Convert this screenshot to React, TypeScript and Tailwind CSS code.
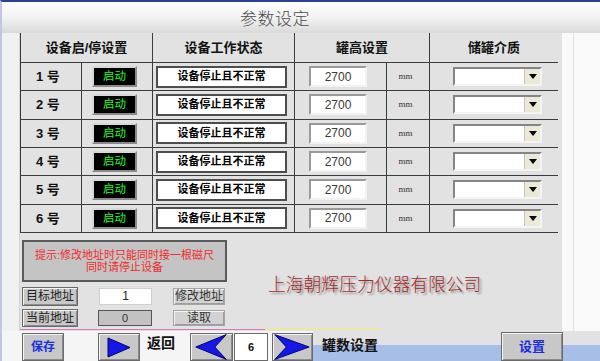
const rows = [1, 2, 3, 4, 5, 6]

const raised =
  'bg-[#c8c8c8] border border-[#6a6a6a] shadow-[inset_1px_1px_0_#f4f4f4,inset_-1px_-1px_0_#8c8c8c]'
const flatBtn =
  'bg-[#d2d2d2] border border-[#a4a4a4] shadow-[inset_1px_1px_0_#f4f4f4,inset_-1px_-1px_0_#9c9c9c]'

function DeviceRow({ n }: { n: number }) {
  return (
    <div className="flex h-[28.33px] border-b border-[#3c3c3c] items-center">
      <div className="w-[62px] h-full border-l border-r border-[#3c3c3c] flex items-center pl-[15px] text-[13px] font-bold text-[#111]">
        {n} 号
      </div>
      <div className="w-[71px] h-full border-r border-[#3c3c3c] flex items-center pl-[10px]">
        <div className="w-[45px] h-[21px] bg-black border-2 border-t-[#d8d8d8] border-l-[#d8d8d8] border-b-[#8a8a8a] border-r-[#8a8a8a] flex items-center justify-center text-[11.5px] text-[#1cff1c] leading-none">
          启动
        </div>
      </div>
      <div className="w-[142px] h-full border-r border-[#3c3c3c] flex items-center pl-[3px]">
        <div className="w-[131px] h-[22px] bg-white border-2 border-[#4e4e4e] flex items-center justify-center text-[11px] font-bold text-black leading-none">
          设备停止且不正常
        </div>
      </div>
      <div className="w-[92px] h-full border-r border-[#3c3c3c] flex items-center pl-[14px]">
        <div className="w-[58px] h-[21px] bg-white border-2 border-t-[#9a9a9a] border-l-[#9a9a9a] border-b-[#f2f2f2] border-r-[#f2f2f2] flex items-center justify-center text-[12px] text-[#3a3a3a] leading-none">
          2700
        </div>
      </div>
      <div className="w-[43px] h-full border-r border-[#3c3c3c] flex items-center justify-center pr-[5px] font-['Liberation_Serif',serif] text-[9px] text-[#333]">
        mm
      </div>
      <div className="w-[128px] h-full flex items-center pl-[23px]">
        <div className="w-[89px] h-[19px] bg-white border-2 border-t-[#858585] border-l-[#858585] border-b-[#f4f4f4] border-r-[#f4f4f4] flex justify-end">
          <div className="w-[16px] h-full bg-[#ece9d8] border-l border-[#c8c4b0] flex items-center justify-center">
            <svg width="8" height="5" viewBox="0 0 8 5">
              <polygon points="0,0 8,0 4,5" fill="#000" />
            </svg>
          </div>
        </div>
      </div>
    </div>
  )
}

export default function App() {
  return (
    <div className="w-[600px] h-[361px] overflow-hidden bg-white flex flex-col border-t-2 border-t-[#2e3f96] border-l-2 border-l-[#c2c4ea] font-['Liberation_Sans','Noto_Sans_CJK_SC',sans-serif]">
      {/* title */}
      <div className="h-[31px] shrink-0 bg-gradient-to-b from-[#fdfdfe] via-[#f2f2f2] to-[#dadada] flex items-center pl-[238px] pt-[4px]">
        <span className="text-[17px] text-[#4a4a4a] tracking-[0.5px] font-light">参数设定</span>
      </div>

      {/* body */}
      <div className="h-[298px] shrink-0 flex">
        <div className="w-[18px] bg-[#f1f1f1] border-r border-[#d4d4d4]" />
        <div className="w-[542px] bg-[#e2e2e2] flex flex-col">
          <div className="w-[538px]">
            <div className="flex h-[30px] border-b border-[#3c3c3c] text-[13px] font-bold text-[#111]">
              <div className="w-[133px] border-l border-r border-[#3c3c3c] flex items-center justify-center">设备启/停设置</div>
              <div className="w-[142px] border-r border-[#3c3c3c] flex items-center justify-center">设备工作状态</div>
              <div className="w-[135px] border-r border-[#3c3c3c] flex items-center justify-center">罐高设置</div>
              <div className="w-[128px] flex items-center justify-center">储罐介质</div>
            </div>
            {rows.map((n) => (
              <DeviceRow key={n} n={n} />
            ))}
          </div>

          <div className="flex-1 flex flex-col">
            <div className="flex flex-1">
              <div className="w-[248px] pl-[2px] pt-[7px] flex flex-col">
                <div className="w-[205px] h-[42px] bg-[#c4c4c4] border-2 border-[#5a5a5a] flex flex-col items-center justify-center text-[11px] leading-[12px] text-[#f22a2a]">
                  <span>提示:修改地址时只能同时接一根磁尺</span>
                  <span>同时请停止设备</span>
                </div>
                <div className="flex items-center mt-[5px] h-[19px]">
                  <div className={`w-[56px] h-[19px] ${raised} flex items-center justify-center text-[12px] text-[#222]`}>目标地址</div>
                  <div className="ml-[21px] w-[53px] h-[17px] bg-white border border-[#cfcfcf] flex items-center justify-center text-[12px] text-[#222]">1</div>
                  <div className={`ml-[21px] w-[52px] h-[17px] ${flatBtn} flex items-center justify-center text-[12px] text-[#333]`}>修改地址</div>
                </div>
                <div className="flex items-center mt-[3px] h-[18px]">
                  <div className={`w-[56px] h-[18px] ${raised} flex items-center justify-center text-[12px] text-[#222]`}>当前地址</div>
                  <div className="ml-[20px] w-[54px] h-[16px] bg-[#c2c2c2] border border-[#555] flex items-center justify-center text-[11px] text-[#333]">0</div>
                  <div className={`ml-[21px] w-[52px] h-[16px] ${flatBtn} flex items-center justify-center text-[12px] text-[#333]`}>读取</div>
                </div>
              </div>
              <div className="pt-[41px]">
                <span className="text-[17.8px] leading-[22px] text-[#a42a2a] font-light [text-shadow:2px_2px_2px_#8c8c8c]">
                  上海朝辉压力仪器有限公司
                </span>
              </div>
            </div>
            <div className="flex h-[1px] mb-[1px]">
              <div className="w-[245px] bg-[#d878c8]" />
              <div className="w-[115px] bg-[#f2ee70]" />
            </div>
          </div>
        </div>
        <div className="flex-1 bg-[#f9f9f9]">
          <div className="ml-[11px] h-full border-l border-[#e2e2e2]" />
        </div>
      </div>

      {/* bottom bar */}
      <div className="h-[30px] shrink-0 flex">
        <div className="w-[311px] bg-[#f5f5f5] flex items-start pt-[2px]">
          <div className={`ml-[20px] w-[42px] h-[28px] ${raised} flex items-center justify-center text-[12px] font-bold text-[#1a2ee0]`}>保存</div>
          <div className={`ml-[34px] w-[42px] h-[28px] ${raised} flex items-center justify-center`}>
            <svg width="24" height="21" viewBox="0 0 24 21">
              <polygon points="1,1 23,10.5 1,20" fill="#1616e6" stroke="#00006a" strokeWidth="1" />
            </svg>
          </div>
          <span className="ml-[7px] mt-[1px] text-[14px] font-bold text-[#111] leading-[18px]">返回</span>
          <div className={`ml-[15px] w-[43px] h-[28px] ${raised} flex items-center justify-center`}>
            <svg width="43" height="28" viewBox="0 0 43 28">
              <polygon points="5,14 37,1 25,14 37,27" fill="#1616e6" stroke="#00006a" strokeWidth="1" />
            </svg>
          </div>
          <div className="ml-[1px] w-[34px] h-[28px] bg-white border border-[#6a6a6a] flex items-center justify-center text-[11px] font-bold text-[#111]">6</div>
          <div className={`ml-[4px] w-[41px] h-[28px] ${raised} flex items-center justify-center`}>
            <svg width="41" height="28" viewBox="0 0 41 28">
              <polygon points="2,1 38,14 2,27 14,14" fill="#1616e6" stroke="#00006a" strokeWidth="1" />
            </svg>
          </div>
        </div>
        <div className="flex-1 flex items-start bg-[linear-gradient(to_bottom,#e2e2e2_0,#e2e2e2_14px,#a7bfe6_14px)]">
          <span className="ml-[9px] mt-[5px] text-[14px] font-bold text-[#111] leading-[18px]">罐数设置</span>
          <div className={`ml-auto mr-[37px] mt-[1px] w-[62px] h-[29px] ${raised} flex items-center justify-center text-[13px] font-bold text-[#1a2ee0]`}>设置</div>
        </div>
      </div>
    </div>
  )
}
